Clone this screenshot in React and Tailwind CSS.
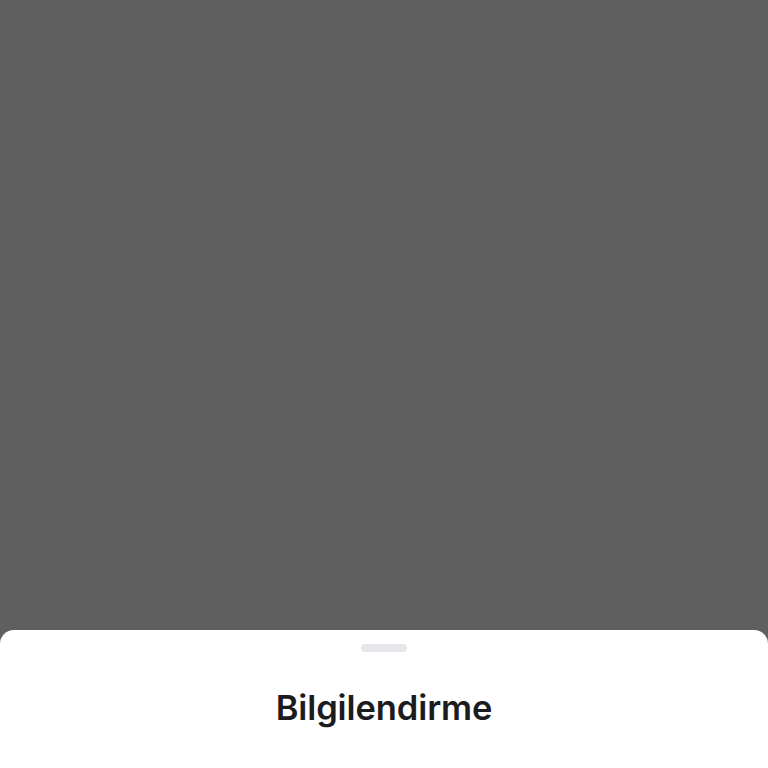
export default function App() {
  return (
    <div className="flex flex-col h-screen w-full bg-[#5f5f5f]" style={{ fontFamily: "Inter, 'Noto Sans', sans-serif" }}>
      <div className="flex-1" />
      <div className="flex flex-col items-center h-[138px] bg-white rounded-t-[14px]">
        <div className="mt-[14px] w-[46px] h-[8px] rounded-full bg-[#e6e6eb]" />
        <h1 className="mt-[39px] text-[34.5px] leading-none font-semibold text-[#1c1c1e] tracking-[-0.1px]">
          Bilgilendirme
        </h1>
      </div>
    </div>
  );
}
